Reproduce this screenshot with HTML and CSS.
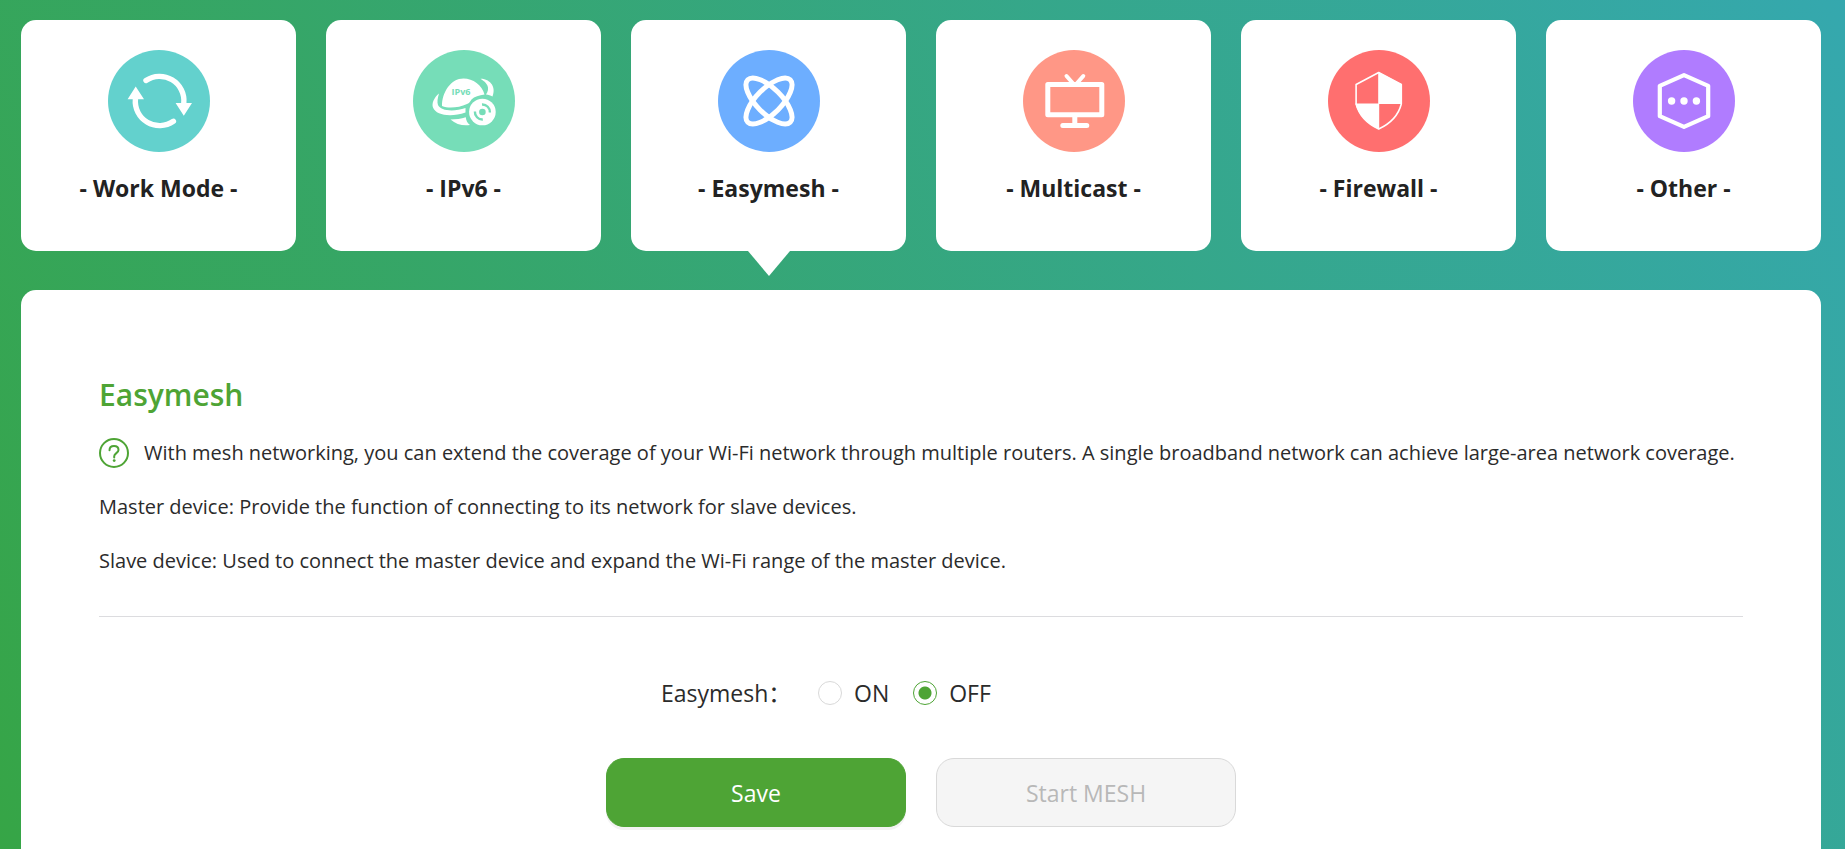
FILE: index.html
```html
<!DOCTYPE html>
<html lang="en">
<head>
<meta charset="utf-8">
<title>Easymesh</title>
<link rel="stylesheet" href="styles.css">
</head>
<body>
<nav class="tabs">
  <button class="tab" type="button">
    <svg class="tab-icon" viewBox="0 0 102 102" aria-hidden="true">
      <circle cx="51" cy="51" r="51" fill="#63d1cd"/>
      <g fill="none" stroke="#fff" stroke-width="5.4" stroke-linecap="round">
        <path d="M38 30.5A24.3 24.3 0 0 1 75.8 53"/>
        <path d="M65.4 71.3A24.3 24.3 0 0 1 27.4 49"/>
      </g>
      <path fill="#fff" d="M67.6 53h16.4L75.8 65.8zM19.6 49.3H36L27.7 36.5z"/>
    </svg>
    <span>- Work Mode -</span>
  </button>
  <button class="tab" type="button">
    <svg class="tab-icon" viewBox="0 0 102 102" aria-hidden="true">
      <circle cx="51" cy="51" r="51" fill="#76ddb8"/>
      <g fill="#fff">
        <path d="M29 56C29 42 38 28.5 50.500 28.500C60 28.500 69 35 71.500 44.500C66 45.500 61.500 46.500 58.500 49.500C57 51.500 56.500 53 54 54C46 57.500 36 59 29 56z"/>
        <path d="M26 43.500C21 47.500 18.500 53.500 20 57.500C23 65.500 38 67.500 52.500 62.500V58C41 62 27.500 61 25 55C24 52 24.500 48.500 26 43.500z"/>
        <path d="M67.500 28.700C75 28.500 84 35 79.500 46.500C77.500 45.500 75.500 44.500 73 44.500C77.500 38 74.500 33 67.500 28.700z"/>
        <path d="M37.500 69.500C43 69.500 48 68.500 52.800 67.200C53 70.500 54.500 73 57 75C50 76 43 74.500 37.500 69.500z"/>
        <circle cx="69.400" cy="62" r="13.300"/>
      </g>
      <text x="48" y="45" text-anchor="middle" class="icon-text">IPv6</text>
      <circle cx="69.400" cy="62" r="3.300" fill="#76ddb8"/>
      <path fill="none" stroke="#76ddb8" stroke-width="2.400" d="M69 54.500A7.500 7.500 0 0 1 76.900 62.500M61.900 61.500A7.500 7.500 0 0 0 69.800 69.500"/>
    </svg>
    <span>- IPv6 -</span>
  </button>
  <button class="tab tab-active" type="button" aria-current="page">
    <svg class="tab-icon" viewBox="0 0 102 102" aria-hidden="true">
      <circle cx="51" cy="51" r="51" fill="#6daeff"/>
      <g fill="none" stroke="#fff" stroke-width="5">
        <ellipse cx="51" cy="51" rx="30" ry="12.600" transform="rotate(45 51 51)"/>
        <ellipse cx="51" cy="51" rx="30" ry="12.600" transform="rotate(-45 51 51)"/>
      </g>
    </svg>
    <span>- Easymesh -</span>
  </button>
  <button class="tab" type="button">
    <svg class="tab-icon" viewBox="0 0 102 102" aria-hidden="true">
      <circle cx="51" cy="51" r="51" fill="#ff9786"/>
      <g fill="none" stroke="#fff" stroke-width="5" stroke-linecap="round" stroke-linejoin="round">
        <path d="M24.800 34.500h54v30.300h-54zM51.800 65v10M39.800 75.600h24"/>
        <path stroke-width="4" d="M43.500 26l7 8M60.300 26l-7 8"/>
      </g>
    </svg>
    <span>- Multicast -</span>
  </button>
  <button class="tab" type="button">
    <svg class="tab-icon" viewBox="0 0 102 102" aria-hidden="true">
      <circle cx="51" cy="51" r="51" fill="#ff6f6f"/>
      <path fill="none" stroke="#fff" stroke-width="1.600" stroke-linejoin="round" d="M50.700 22.500L28.100 34.500V54C31 65 40 74 50.700 79C61.500 74 70.500 65 73.300 54V34.500z"/>
      <path fill="#fff" d="M50.200 22L74 34.200V54H50.200zM27.500 53.400H51.200V79.500C40 74.500 30.500 65 27.500 54z"/>
    </svg>
    <span>- Firewall -</span>
  </button>
  <button class="tab" type="button">
    <svg class="tab-icon" viewBox="0 0 102 102" aria-hidden="true">
      <circle cx="51" cy="51" r="51" fill="#b07cff"/>
      <path fill="none" stroke="#fff" stroke-width="4.200" stroke-linejoin="round" d="M51 25.200L75.200 35.800V66.200L51 76.800L26.800 66.200V35.800z"/>
      <g fill="#fff"><circle cx="38.600" cy="51" r="3.700"/><circle cx="51" cy="51" r="3.700"/><circle cx="63.400" cy="51" r="3.700"/></g>
    </svg>
    <span>- Other -</span>
  </button>
</nav>
<main class="panel">
  <section class="intro">
    <h1 class="title">Easymesh</h1>
    <p class="line">
      <svg class="help" viewBox="0 0 30 30" aria-hidden="true">
        <g fill="none" stroke="#4ea435" stroke-width="2">
          <circle cx="15" cy="15" r="14"/>
          <path d="M10.500 12.200C10.500 9.500 12.400 7.900 15 7.900S19.500 9.500 19.500 12C19.500 14.800 15.200 15.400 15.200 18.200V19.500" stroke-linecap="round"/>
        </g>
        <circle cx="15.200" cy="22.600" r="1.400" fill="#4ea435"/>
      </svg>
      With mesh networking, you can extend the coverage of your Wi-Fi network through multiple routers. A single broadband network can achieve large-area network coverage.
    </p>
    <p class="line">Master device: Provide the function of connecting to its network for slave devices.</p>
    <p class="line">Slave device: Used to connect the master device and expand the Wi-Fi range of the master device.</p>
  </section>
  <form class="form">
    <div class="field" role="radiogroup" aria-labelledby="mesh-label">
      <span class="field-label" id="mesh-label">Easymesh：</span>
      <label class="option"><input class="radio" type="radio" name="mesh" value="on">ON</label>
      <label class="option"><input class="radio" type="radio" name="mesh" value="off" checked>OFF</label>
    </div>
    <div class="actions">
      <button class="btn btn-primary" type="button">Save</button>
      <button class="btn" type="button" disabled>Start MESH</button>
    </div>
  </form>
</main>
</body>
</html>
```
FILE: styles.css
```css
* {
  box-sizing: border-box;
}

body {
  display: flex;
  flex-direction: column;
  gap: 39px;
  min-height: 100vh;
  margin: 0;
  padding: 20px 24px 0 21px;
  background: linear-gradient(60deg, #36a546, #35a8ae);
  color: #2b2b2b;
  font-family: "Open Sans", "Noto Sans CJK SC", sans-serif;
  font-size: 20px;
}

button {
  font: inherit;
}

.tabs {
  display: grid;
  grid-template-columns: repeat(6, 1fr);
  gap: 30px;
}

.tab {
  position: relative;
  display: flex;
  flex-direction: column;
  align-items: center;
  gap: 18px;
  padding: 30px 0 45px;
  border: 0;
  border-radius: 15px;
  background: #fff;
  color: #222;
  font-size: 23px;
  font-weight: 700;
  line-height: 36px;
}

.tab-active::after {
  content: "";
  position: absolute;
  top: 100%;
  left: 50%;
  margin-left: -21px;
  border: 21px solid transparent;
  border-top: 25px solid #fff;
  border-bottom: 0;
}

.tab-icon {
  width: 102px;
  height: 102px;
}

.icon-text {
  fill: #76ddb8;
  font-size: 9px;
  font-weight: 700;
}

.panel {
  flex: 1;
  padding: 78px 78px 22px;
  border-radius: 15px 15px 0 0;
  background: #fff;
}

.intro {
  padding-bottom: 28px;
  border-bottom: 1px solid #dcdcdf;
}

.title {
  margin: 0 0 4px;
  color: #4ea435;
  font-size: 30px;
  font-weight: 600;
  line-height: 54px;
}

.line {
  display: flex;
  align-items: center;
  gap: 15px;
  margin: 0;
  line-height: 54px;
}

.help {
  flex: none;
  width: 30px;
  height: 30px;
}

.form {
  display: flex;
  flex-direction: column;
  gap: 38px;
  width: 630px;
  margin: 49px auto 0;
  font-size: 23px;
}

.field {
  display: flex;
  align-items: center;
  gap: 24px;
  padding-left: 55px;
  line-height: 54px;
}

.field-label {
  width: 133px;
}

.option {
  display: flex;
  align-items: center;
  gap: 12px;
}

.radio {
  appearance: none;
  width: 24px;
  height: 24px;
  margin: 0;
  border: 1px solid #d9d9d9;
  border-radius: 50%;
  background: #fff;
}

.radio:checked {
  border-color: #4ea435;
  background: radial-gradient(circle, #4ea435 6px, #fff 7px);
}

.actions {
  display: grid;
  grid-template-columns: 1fr 1fr;
  gap: 30px;
}

.btn {
  height: 69px;
  border: 1px solid #d9d9d9;
  border-radius: 18px;
  background: #f5f5f5;
  color: #b8b8b8;
}

.btn-primary {
  border-color: #4ea435;
  background: #4ea435;
  box-shadow: 0 3px 0 #f3f3f3;
  color: #fff;
}
```
